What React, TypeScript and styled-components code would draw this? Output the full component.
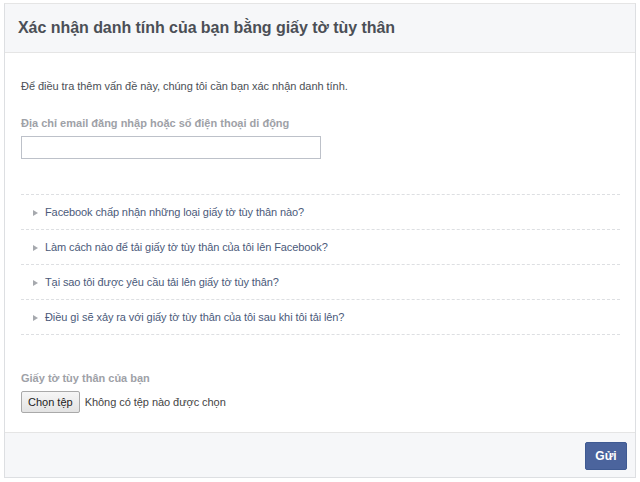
import React from "react";
import styled, { createGlobalStyle } from "styled-components";

const Global = createGlobalStyle`
  html, body { margin: 0; padding: 0; background: #fff; }
  body { font-family: "Liberation Sans", Arial, sans-serif; }
`;

const Page = styled.div`
  padding: 3px 4px 4px 4px;
`;

const Panel = styled.div`
  width: 632px;
  height: 475px;
  box-sizing: border-box;
  border: 1px solid #dddfe2;
  border-top-color: #e5e5e5;
  display: flex;
  flex-direction: column;
  background: #fff;
`;

const Header = styled.div`
  height: 48px;
  flex: none;
  background: #f6f7f9;
  border-bottom: 1px solid #e5e5e5;
  display: flex;
  align-items: center;
  padding-left: 13px;
`;

const Title = styled.h2`
  margin: 0;
  font-size: 16px;
  font-weight: bold;
  color: #4b4f56;
  letter-spacing: -0.05px;
  font-family: "Liberation Sans", Arial, sans-serif;
`;

const Body = styled.div`
  flex: 1;
  padding: 25px 15px 0 16px;
  display: flex;
  flex-direction: column;
`;

const Intro = styled.p`
  margin: 0;
  font-size: 11px;
  line-height: 16px;
  color: #4b4f56;
  letter-spacing: -0.05px;
`;

const Label = styled.div<{ $top: number }>`
  margin-top: ${(p) => p.$top}px;
  font-size: 11px;
  font-weight: bold;
  line-height: 16px;
  color: #9ea1a7;
`;

const TextInput = styled.input`
  margin-top: 5px;
  width: 300px;
  height: 23px;
  box-sizing: border-box;
  border: 1px solid #bdc1c9;
  padding: 3px;
  outline: none;
`;

const Faq = styled.ul`
  list-style: none;
  margin: 35px 0 0 0;
  padding: 0;
  border-bottom: 1px dashed #dddfe2;
`;

const FaqItem = styled.li`
  height: 34px;
  border-top: 1px dashed #dddfe2;
  display: flex;
  align-items: center;
  padding-left: 12px;
  font-size: 11px;
  letter-spacing: -0.1px;
  color: #4b5a7a;
`;

const Arrow = styled.span`
  width: 0;
  height: 0;
  border-top: 3.5px solid transparent;
  border-bottom: 3.5px solid transparent;
  border-left: 5px solid #a6a9ae;
  margin-right: 7px;
  margin-top: 1px;
`;

const FileRow = styled.div`
  margin-top: 5px;
  display: flex;
  align-items: center;
  gap: 5px;
`;

const FileButton = styled.button`
  height: 22px;
  padding: 0 6px;
  font-family: "Liberation Sans", Arial, sans-serif;
  font-size: 11px;
  color: #222;
  background: linear-gradient(#f6f6f6, #e3e3e3);
  border: 1px solid #a9a9a9;
  border-radius: 2px;
`;

const FileText = styled.span`
  font-size: 11px;
  color: #444;
  letter-spacing: -0.05px;
`;

const Footer = styled.div`
  height: 44px;
  flex: none;
  background: #f6f7f9;
  border-top: 1px solid #e5e5e5;
  display: flex;
  align-items: center;
  justify-content: flex-end;
  padding-right: 8px;
`;

const SubmitButton = styled.button`
  width: 42px;
  height: 28px;
  background: #4b649d;
  border: 1px solid #3f5a92;
  border-radius: 2px;
  color: #fff;
  font-family: "Liberation Sans", Arial, sans-serif;
  font-weight: bold;
  font-size: 12px;
  padding: 0;
  margin-top: 2px;
`;

const faqs = [
  "Facebook chấp nhận những loại giấy tờ tùy thân nào?",
  "Làm cách nào để tải giấy tờ tùy thân của tôi lên Facebook?",
  "Tại sao tôi được yêu cầu tải lên giấy tờ tùy thân?",
  "Điều gì sẽ xảy ra với giấy tờ tùy thân của tôi sau khi tôi tải lên?",
];

export default function App() {
  return (
    <>
      <Global />
      <Page>
        <Panel>
          <Header>
            <Title>Xác nhận danh tính của bạn bằng giấy tờ tùy thân</Title>
          </Header>
          <Body>
            <Intro>Để điều tra thêm vấn đề này, chúng tôi cần bạn xác nhận danh tính.</Intro>
            <Label $top={21}>Địa chỉ email đăng nhập hoặc số điện thoại di động</Label>
            <TextInput type="text" />
            <Faq>
              {faqs.map((q) => (
                <FaqItem key={q}>
                  <Arrow />
                  {q}
                </FaqItem>
              ))}
            </Faq>
            <Label $top={35}>Giấy tờ tùy thân của bạn</Label>
            <FileRow>
              <FileButton type="button">Chọn tệp</FileButton>
              <FileText>Không có tệp nào được chọn</FileText>
            </FileRow>
          </Body>
          <Footer>
            <SubmitButton type="button">Gửi</SubmitButton>
          </Footer>
        </Panel>
      </Page>
    </>
  );
}
